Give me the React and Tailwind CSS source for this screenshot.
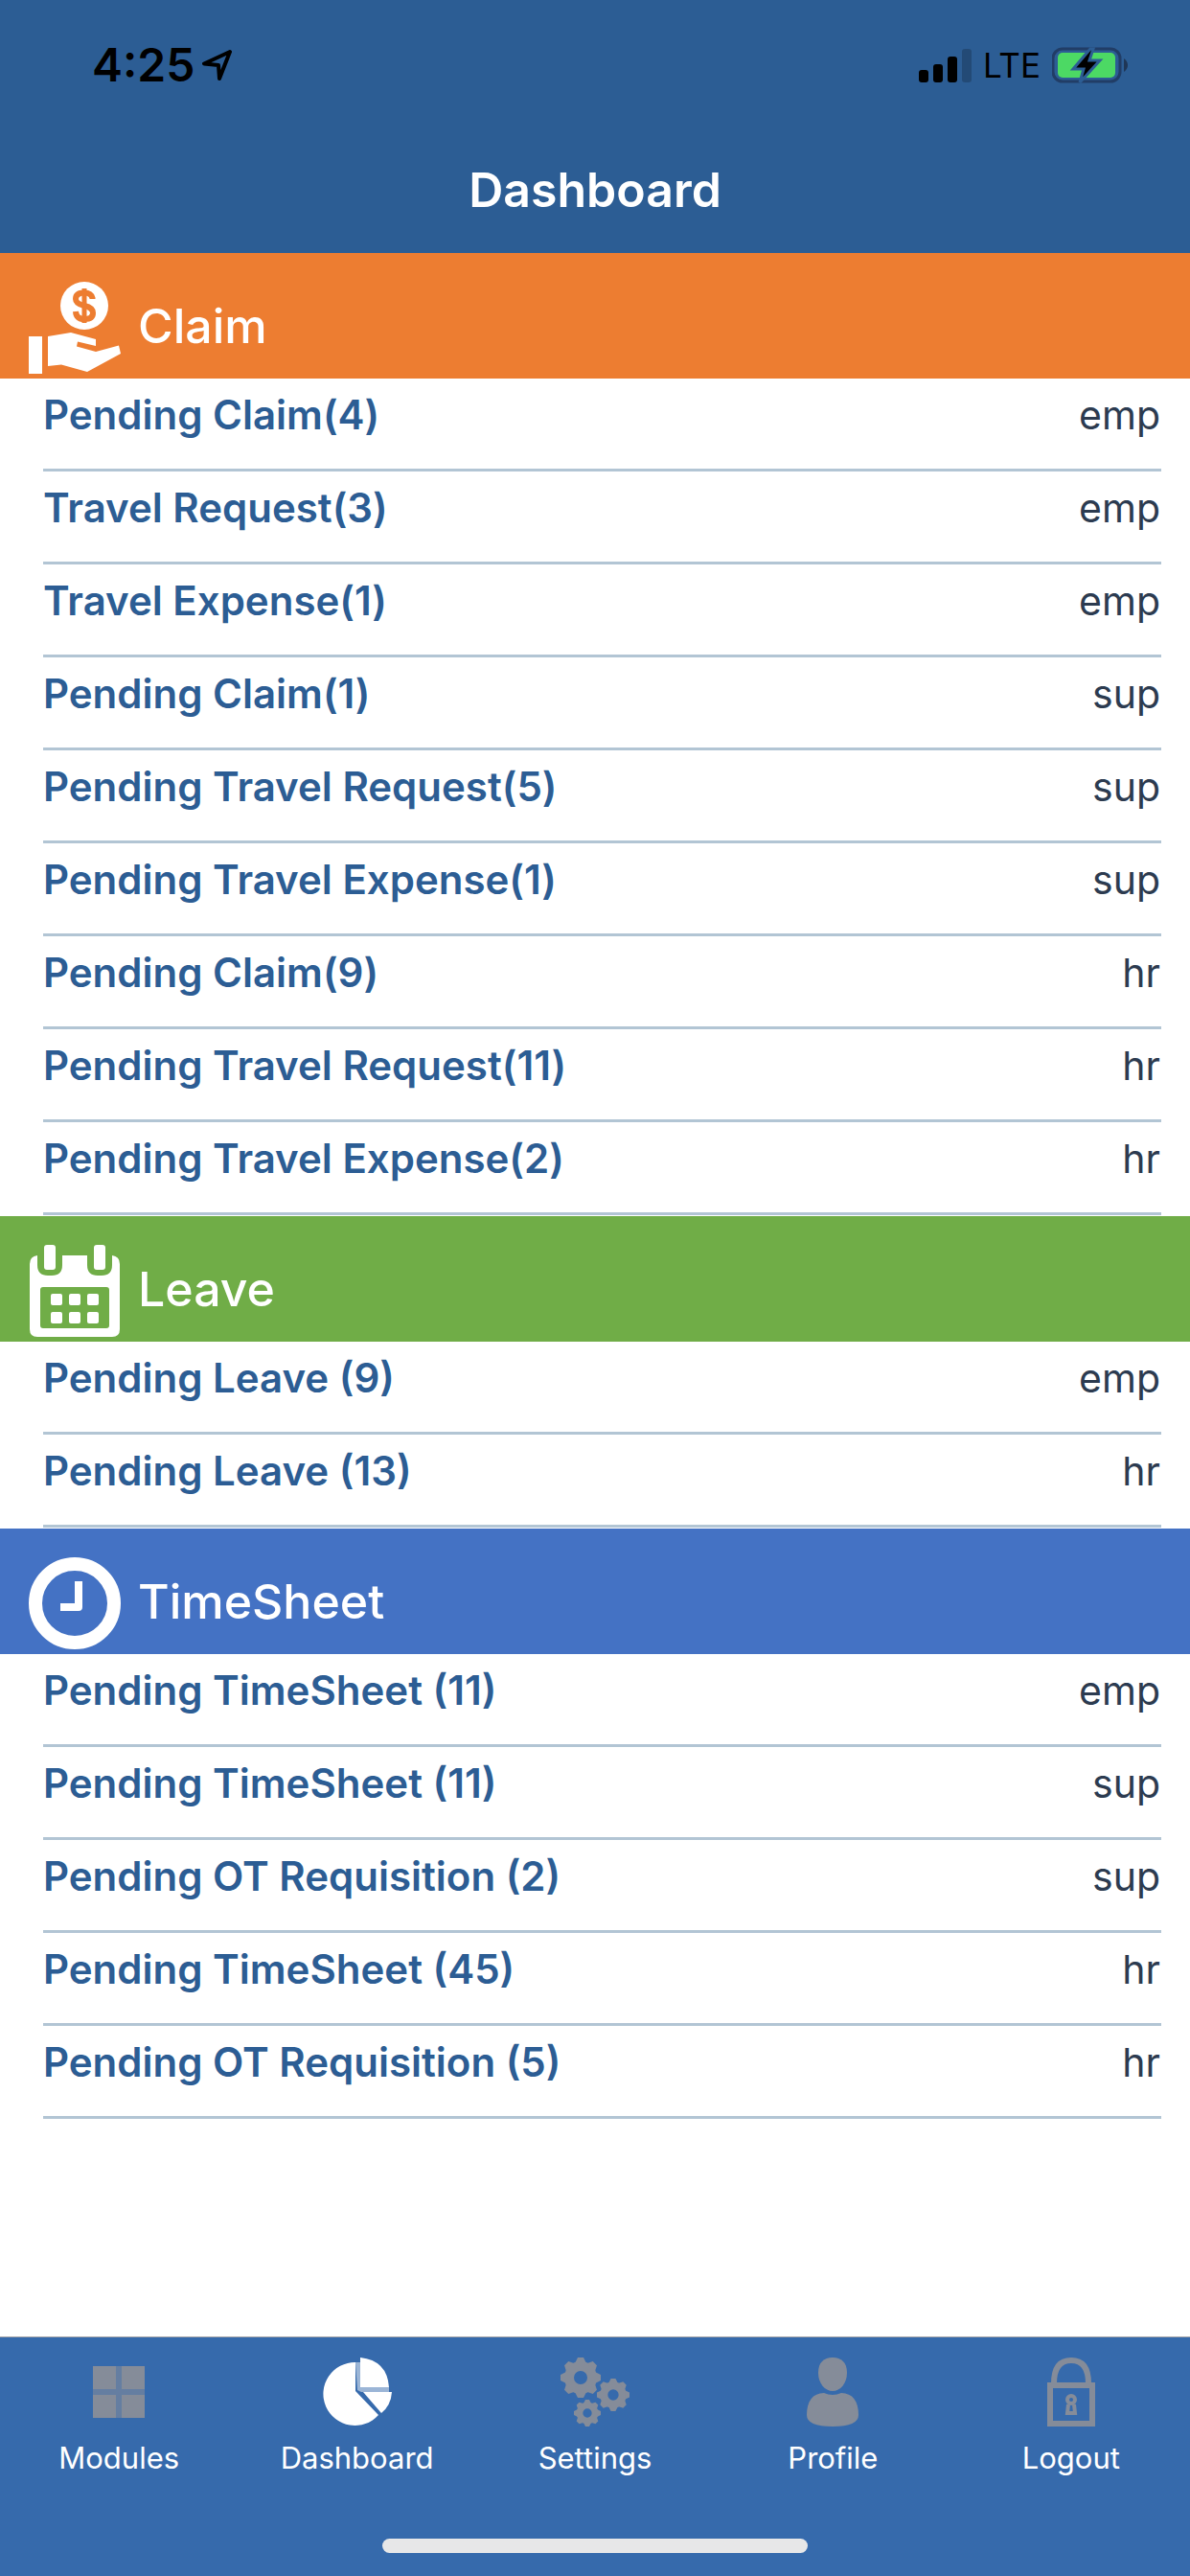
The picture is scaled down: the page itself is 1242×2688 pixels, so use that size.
import React from 'react';

const sections = [
  {
    title: 'Claim',
    icon: HandCoinIcon,
    className: 'bg-[#ed7d31]',
    rows: [
      ['Pending Claim(4)', 'emp'],
      ['Travel Request(3)', 'emp'],
      ['Travel Expense(1)', 'emp'],
      ['Pending Claim(1)', 'sup'],
      ['Pending Travel Request(5)', 'sup'],
      ['Pending Travel Expense(1)', 'sup'],
      ['Pending Claim(9)', 'hr'],
      ['Pending Travel Request(11)', 'hr'],
      ['Pending Travel Expense(2)', 'hr'],
    ],
  },
  {
    title: 'Leave',
    icon: CalendarIcon,
    className: 'bg-[#70ad47]',
    rows: [
      ['Pending Leave (9)', 'emp'],
      ['Pending Leave (13)', 'hr'],
    ],
  },
  {
    title: 'TimeSheet',
    icon: ClockIcon,
    className: 'bg-[#4472c4]',
    rows: [
      ['Pending TimeSheet (11)', 'emp'],
      ['Pending TimeSheet (11)', 'sup'],
      ['Pending OT Requisition (2)', 'sup'],
      ['Pending TimeSheet (45)', 'hr'],
      ['Pending OT Requisition (5)', 'hr'],
    ],
  },
];

const tabs = [
  { label: 'Modules', icon: ModulesIcon },
  { label: 'Dashboard', icon: PieIcon, active: true },
  { label: 'Settings', icon: GearsIcon },
  { label: 'Profile', icon: ProfileIcon },
  { label: 'Logout', icon: LockIcon },
];

function HandCoinIcon() {
  return (
    <svg viewBox="0 0 96 96" className="w-24 h-24" fill="currentColor" aria-hidden="true">
      <circle cx="58" cy="25" r="25" />
      <g className="text-[#ed7d31]" fill="none" stroke="currentColor" strokeWidth="6">
        <path d="M66.500 18V17Q65 11.500 58 11.500Q49 11.500 49 18Q49 23 58 25Q67 27 67 32.500Q67 39 58 39Q49.500 39 49 31" />
        <path d="M58 7V43" strokeWidth="5" />
      </g>
      <path d="M0 57H14V96H0ZM20 57L44 53L70 60V67L51 62.500L50 67.500L70 73L94 66.500L96 75L61 94L34 86.500L20 88Z" />
    </svg>
  );
}

function CalendarIcon() {
  return (
    <svg viewBox="0 0 96 96" className="w-24 h-24" fill="currentColor" aria-hidden="true">
      <rect x="16" y="0" width="12" height="26" rx="3" />
      <rect x="68" y="0" width="12" height="26" rx="3" />
      <path
        fillRule="evenodd"
        d="M9 11V21Q9 32 20 32H24Q35 32 35 21V11H61V21Q61 32 72 32H76Q87 32 87 21V11Q95 12 95 20V88Q95 96 87 96H9Q1 96 1 88V20Q1 12 9 11ZM15 44Q12 44 12 47V84Q12 87 15 87H81Q84 87 84 84V47Q84 44 81 44Z"
      />
      {[23, 42, 61].map((x) => (
        <g key={x}>
          <rect x={x} y="51" width="12" height="12" rx="2" />
          <rect x={x} y="70" width="12" height="12" rx="2" />
        </g>
      ))}
    </svg>
  );
}

function ClockIcon() {
  return (
    <svg viewBox="0 0 96 96" className="w-24 h-24" fill="none" stroke="currentColor" aria-hidden="true">
      <circle cx="48" cy="48" r="41" strokeWidth="14" />
      <path d="M52 25V52H33" strokeWidth="8" strokeLinejoin="round" />
    </svg>
  );
}

function ModulesIcon() {
  return (
    <svg viewBox="0 0 72 72" className="w-[72px] h-[72px]" fill="currentColor" aria-hidden="true">
      <rect x="9" y="9" width="54" height="54" opacity="0.6" />
      <path d="M9 9H33V33H9ZM39 9H63V33H39ZM9 39H33V63H9ZM39 39H63V63H39Z" />
    </svg>
  );
}

function PieIcon() {
  return (
    <svg viewBox="0 0 72 72" className="w-[72px] h-[72px]" fill="currentColor" aria-hidden="true">
      <path d="M34 5V35L58 60A33 33 0 1 1 34 5Z" />
      <path d="M39 0Q67 3 69 31H39Z" />
      <path d="M42 36H72Q71 50 61 58Z" />
      <path d="M34 5H39V31H69V36H40L36 34Z" opacity="0.5" />
    </svg>
  );
}

function Gear({ cx, cy, r }) {
  const teeth = [0, 45, 90, 135];
  return (
    <g transform={`translate(${cx} ${cy}) scale(${r / 21})`}>
      <circle r="12" fill="none" stroke="currentColor" strokeWidth="10" />
      {teeth.map((a) => (
        <path
          key={a}
          transform={`rotate(${a})`}
          d="M-6 -15L-3 -21H3L6 -15ZM-6 15L-3 21H3L6 15Z"
        />
      ))}
    </g>
  );
}

function GearsIcon() {
  return (
    <svg viewBox="0 0 72 72" className="w-[72px] h-[72px]" fill="currentColor" aria-hidden="true">
      <Gear cx={21} cy={21} r={21} />
      <Gear cx={55} cy={39} r={17} />
      <Gear cx={28} cy={58} r={14} />
    </svg>
  );
}

function ProfileIcon() {
  return (
    <svg viewBox="0 0 72 72" className="w-[72px] h-[72px]" fill="currentColor" aria-hidden="true">
      <path d="M36 0C45 0 51 5 51 16C51 27 44 35 36 35C28 35 21 27 21 16C21 5 27 0 36 0Z" />
      <path d="M27 37Q36 41 45 37C57 37 63 46 63 60Q63 72 36 72Q9 72 9 60C9 46 15 37 27 37Z" />
    </svg>
  );
}

function LockIcon() {
  return (
    <svg viewBox="0 0 72 72" className="w-[72px] h-[72px]" fill="none" stroke="currentColor" aria-hidden="true">
      <path d="M18 27C18 11 24 3 36 3C48 3 54 11 54 27" strokeWidth="6" />
      <path d="M14 29H58V69H14Z" strokeWidth="6" />
      <circle cx="36" cy="44" r="4" strokeWidth="4" />
      <path d="M33 49L32 58H40L39 49" strokeWidth="4" />
    </svg>
  );
}

function StatusBar() {
  return (
    <div className="flex items-center justify-between h-[132px] pt-1 pl-24 pr-16 text-black">
      <div className="flex items-center gap-2">
        <span className="text-[48px] leading-[60px] font-semibold">4:25</span>
        <svg viewBox="0 0 32 32" className="w-8 h-8" fill="none" stroke="currentColor" strokeWidth="4" strokeLinejoin="round" aria-hidden="true">
          <path d="M29 2L2 14.500L17 16L18 30Z" />
        </svg>
      </div>
      <div className="flex items-center gap-3">
        <svg viewBox="0 0 55 35" className="w-[55px] h-[35px]" fill="currentColor" aria-hidden="true">
          <rect x="0" y="22" width="10" height="13" rx="3" />
          <rect x="15" y="16" width="10" height="19" rx="3" />
          <rect x="30" y="8" width="10" height="27" rx="3" />
          <rect x="45" y="0" width="10" height="35" rx="3" opacity="0.2" />
        </svg>
        <span className="text-[35px] leading-[60px]">LTE</span>
        <svg viewBox="0 0 80 38" className="w-20 h-[38px]" aria-hidden="true">
          <rect x="1" y="2" width="70" height="34" rx="10" fill="none" stroke="#213d66" strokeWidth="3" />
          <path d="M75 12Q79 15 79 19Q79 23 75 26Z" fill="#1f3656" />
          <rect x="6" y="6" width="60" height="26" rx="5" fill="#4cd964" />
          <path d="M40 2L22 23H33L29 37L50 14H39L43 2Z" fill="black" stroke="#2c5d94" strokeWidth="3" />
        </svg>
      </div>
    </div>
  );
}

function Section({ title, icon: Icon, className, rows }) {
  return (
    <section>
      <h2 className={`flex items-end gap-[18px] h-[131px] pl-[30px] pb-[5px] text-white ${className}`}>
        <Icon />
        <span className="text-[50px] leading-[60px] font-medium pb-5">{title}</span>
      </h2>
      <ul className="pl-[45px] pr-[30px]">
        {rows.map(([label, role], i) => (
          <li key={i} className="border-b-3 border-[#b2c5d4]">
            <a href="#" className="flex justify-between h-[94px] pt-[13px] pr-px leading-[50px]">
              <span className="text-[42px] font-semibold text-[#2c5d94]">{label}</span>
              <span className="text-[41px] text-[#2c3b50]">{role}</span>
            </a>
          </li>
        ))}
      </ul>
    </section>
  );
}

export default function App() {
  return (
    <div className="min-h-screen flex flex-col bg-white font-['Inter',sans-serif]">
      <header className="h-[264px] bg-[#2c5d94]">
        <StatusBar />
        <h1 className="flex items-center justify-center h-[132px] text-[50px] leading-[60px] font-semibold text-white">
          Dashboard
        </h1>
      </header>

      <main className="flex-1 flex flex-col gap-px">
        {sections.map((s) => (
          <Section key={s.title} {...s} />
        ))}
      </main>

      <footer className="bg-[#366aac] border-t border-[#a7a7aa]">
        <nav className="grid grid-cols-5 h-[210px] pt-[21px]">
          {tabs.map(({ label, icon: Icon, active }) => (
            <button
              key={label}
              type="button"
              aria-current={active ? 'page' : undefined}
              className="flex flex-col items-center gap-[13px]"
            >
              <span className={active ? 'text-white' : 'text-[#858c99]'}>
                <Icon />
              </span>
              <span className="text-[31px] leading-[40px] text-white">{label}</span>
            </button>
          ))}
        </nav>
        <div className="flex justify-center h-[39px]">
          <div className="w-[444px] h-[15px] rounded-full bg-[#e7e7e8]" />
        </div>
      </footer>
    </div>
  );
}
